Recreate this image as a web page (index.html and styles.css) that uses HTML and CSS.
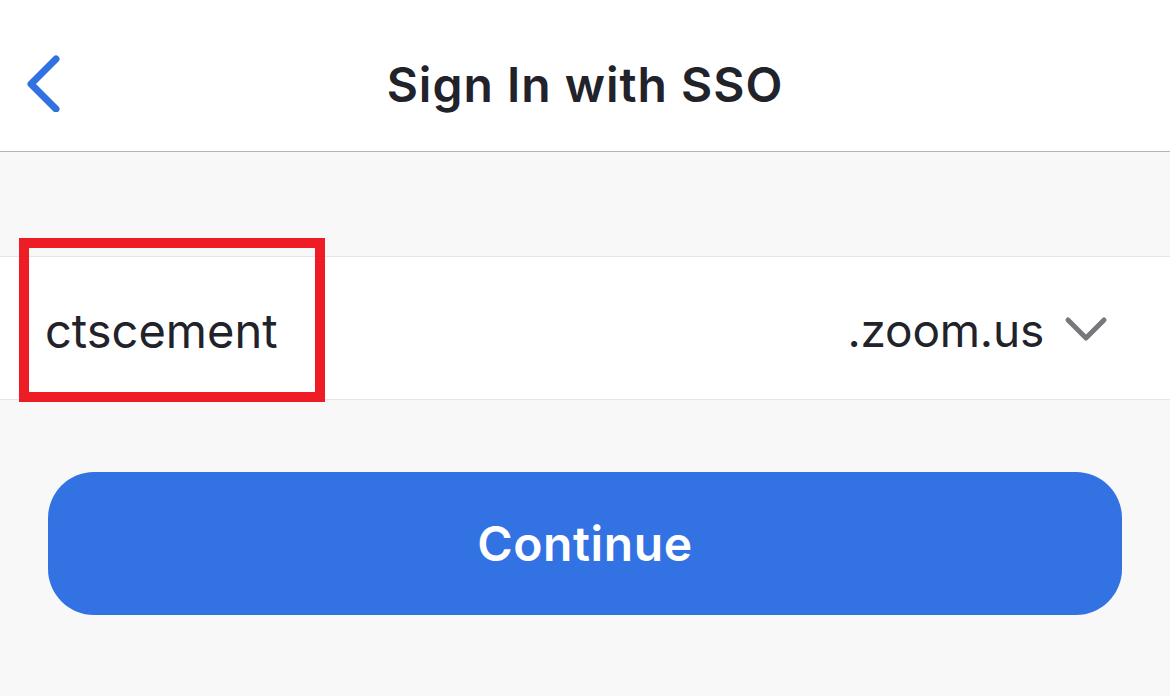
FILE: index.html
```html
<!DOCTYPE html>
<html>
<head>
<meta charset="utf-8">
<link rel="stylesheet" href="styles.css">
</head>
<body>
<div class="screen">
  <header class="nav">
    <svg class="back" width="40" height="60" viewBox="0 0 40 60">
      <polyline points="32,7 7,32 32,57" fill="none" stroke="#3171e0" stroke-width="7" stroke-linecap="round" stroke-linejoin="round"/>
    </svg>
    <h1 class="title">Sign In with SSO</h1>
  </header>
  <main class="content">
    <div class="field">
      <span class="domain-input">ctscement</span>
      <div class="suffix">
        <span>.zoom.us</span>
        <svg class="caret" width="44" height="28" viewBox="0 0 44 28">
          <polyline points="4,5 22,23 40,5" fill="none" stroke="#77777c" stroke-width="5" stroke-linecap="round" stroke-linejoin="round"/>
        </svg>
      </div>
      <div class="highlight"></div>
    </div>
    <button class="continue">Continue</button>
  </main>
</div>
</body>
</html>
```
FILE: styles.css
```css
* { box-sizing: border-box; }
html, body { margin: 0; padding: 0; }
body {
  width: 1170px;
  height: 696px;
  overflow: hidden;
  background: #f8f8f8;
  font-family: Inter, "Noto Sans", sans-serif;
  color: #22222b;
}
.screen { width: 1170px; height: 696px; display: flex; flex-direction: column; }
.nav {
  height: 152px;
  background: #fff;
  border-bottom: 1px solid #b4b4b4;
  display: flex;
  align-items: center;
  justify-content: center;
  position: relative;
  padding-top: 18px;
}
.back { position: absolute; left: 24px; top: 52px; }
.title {
  margin: 0;
  font-size: 48px;
  font-weight: 600;
  letter-spacing: 1px;
  color: #22222b;
  line-height: 1;
}
.content { flex: 1; padding-top: 104px; display: flex; flex-direction: column; }
.field {
  position: relative;
  height: 144px;
  background: #fff;
  border-top: 1px solid #e6e6ea;
  border-bottom: 1px solid #e6e6ea;
  display: flex;
  align-items: center;
  justify-content: space-between;
  padding: 4px 62px 0 45px;
}
.domain-input { font-size: 47px; font-weight: 400; }
.suffix { display: flex; align-items: center; gap: 20px; font-size: 46px; letter-spacing: -0.2px; }
.caret { margin-top: -2px; }
.highlight {
  position: absolute;
  left: 19px;
  top: -19px;
  width: 306px;
  height: 164px;
  border: 10px solid #ee1c25;
}
.continue {
  margin: 72px 48px 0 48px;
  height: 143px;
  border: none;
  border-radius: 46px;
  background: #3372e3;
  color: #fff;
  font-family: Inter, "Noto Sans", sans-serif;
  font-size: 48px;
  font-weight: 600;
  letter-spacing: 0.6px;
}
```
